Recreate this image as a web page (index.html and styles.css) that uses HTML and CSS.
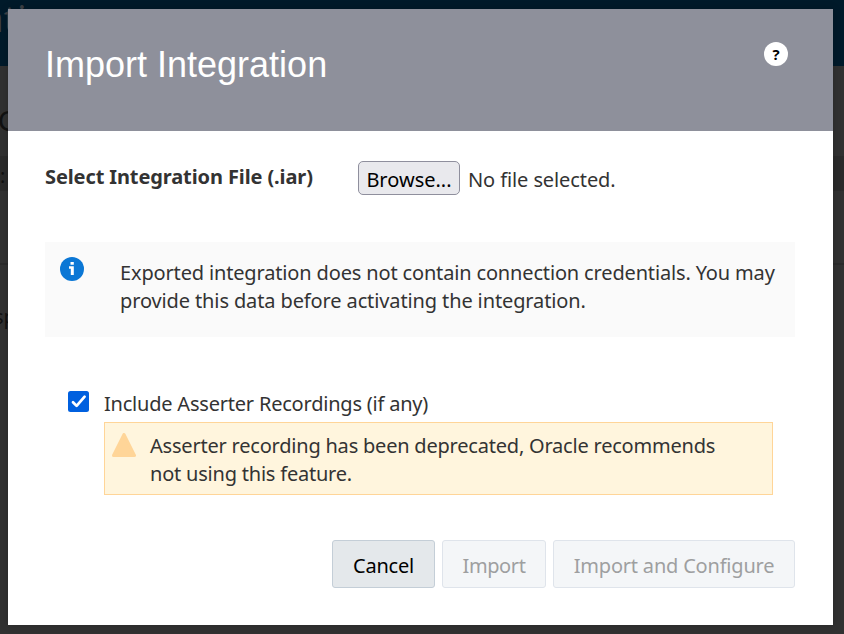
FILE: index.html
```
<!DOCTYPE html>
<html lang="en">
<head>
<meta charset="utf-8">
<title>Import Integration</title>
<link rel="stylesheet" href="styles.css">
</head>
<body>
<div class="page">
  <div class="page-top"><span class="page-brand">ati</span></div>
  <div class="page-heading">C</div>
  <div class="page-filter">:</div>
  <div class="page-list"><span>sp</span></div>
</div>
<section class="dialog" role="dialog" aria-labelledby="title">
  <header class="dialog-header">
    <h1 id="title">Import Integration</h1>
    <button class="help" type="button">?</button>
  </header>
  <div class="file-row">
    <span class="file-label">Select Integration File (.iar)</span>
    <button class="browse" type="button">Browse...</button>
    <span class="file-name">No file selected.</span>
  </div>
  <div class="info">
    <svg class="info-icon" viewBox="0 0 24 24"><circle cx="12" cy="12" r="12" fill="#0b77d5"/><path d="M10.5 5h3.3v2.7h-3.3zM9 9.2h4.8V18h-3v-6.3H9z" fill="#fff"/></svg>
    <p><span class="info-first">Exported integration does not contain connection credentials. You may</span><br>provide this data before activating the integration.</p>
  </div>
  <div class="option">
    <svg class="check" viewBox="0 0 21 21"><rect width="21" height="21" rx="2.5" fill="#0060df"/><path d="M5 11.2l3.6 3.7 8-9.2" fill="none" stroke="#fff" stroke-width="2.7" stroke-linecap="round" stroke-linejoin="round"/></svg>
    <span class="option-label">Include Asserter Recordings (if any)</span>
  </div>
  <div class="warning">
    <svg class="warning-icon" viewBox="0 0 24 24"><path d="M12 1.5L22.5 22.5h-21z" fill="#ffd598" stroke="#ffd598" stroke-width="3" stroke-linejoin="round"/></svg>
    <p>Asserter recording has been deprecated, Oracle recommends<br>not using this feature.</p>
  </div>
  <footer class="actions">
    <button class="btn cancel" type="button">Cancel</button>
    <button class="btn import" type="button" disabled>Import</button>
    <button class="btn configure" type="button" disabled>Import and Configure</button>
  </footer>
</section>
</body>
</html>
```
FILE: styles.css
```
* { box-sizing: border-box; }
body {
  margin: 0;
  height: 634px;
  overflow: hidden;
  background: #313131;
  color: #333;
  font: 20px/28px "Noto Sans", "Open Sans", sans-serif;
}
h1, p { margin: 0; }
button { margin: 0; padding: 0; font: inherit; letter-spacing: inherit; white-space: nowrap; }
svg { display: block; flex: none; }
.page { color: #111; overflow: hidden; height: 634px; }
.page-top { height: 66px; background: #001a2a; color: #3d4146; font-size: 37px; line-height: 36px; }
.page-brand { display: block; margin-left: -17px; }
.page-heading { height: 90px; margin-left: -2px; padding-top: 37px; font: 29px/36px "Liberation Sans", sans-serif; }
.page-filter { height: 35px; padding-top: 6px; background: #2b2b2b; }
.page-list { margin-top: 72px; border-top: 2px solid #2a2a2a; padding-top: 38px; }
.page-list span { display: block; margin-left: -6px; }
.dialog {
  position: absolute;
  left: 8px;
  top: 9px;
  width: 825px;
  height: 616px;
  background: #fff;
  box-shadow: 0 0 8px rgba(0, 0, 0, .2);
}
.dialog-header {
  display: flex;
  justify-content: space-between;
  height: 122px;
  padding: 33px 45px 0 37px;
  background: #8e909b;
}
h1 { padding-top: 1px; color: #fff; font: 36px/44px "Liberation Sans", Arial, sans-serif; }
.help {
  width: 24px;
  height: 24px;
  border: 0;
  border-radius: 50%;
  background: #fff;
  color: #000;
  font: bold 15px/22px "Open Sans", sans-serif;
}
.file-row { display: flex; height: 64px; padding: 30px 0 0 37px; white-space: nowrap; }
.file-label { width: 313px; margin-top: 2px; font-weight: 700; letter-spacing: -.11px; }
.browse {
  width: 102px;
  height: 34px;
  padding-top: 3px;
  border: 1px solid #8f8f9d;
  border-radius: 5px;
  background: #e9e9ed;
  color: #000;
}
.file-name { margin: 5px 0 0 8px; letter-spacing: -.1px; }
.info { display: flex; width: 750px; height: 95px; margin: 47px 0 0 37px; padding: 15px; background: #fafafa; letter-spacing: -.12px; white-space: nowrap; }
.info-icon { width: 24px; height: 24px; }
.info p { margin: 2px 0 0 36px; }
.info-first { letter-spacing: -.155px; }
.option { display: flex; gap: 15px; height: 31px; margin: 54px 0 0 60px; letter-spacing: -.21px; white-space: nowrap; }
.option-label { margin-top: -1px; }
.check { width: 21px; height: 21px; }
.warning { display: flex; gap: 14px; width: 669px; height: 73px; margin: 0 0 0 96px; padding: 9px 7px; border: 1px solid #ffd598; background: #fff5dd; letter-spacing: -.21px; white-space: nowrap; }
.warning-icon { width: 24px; height: 24px; margin-top: 1px; }
.actions { display: flex; justify-content: flex-end; gap: 7px; margin: 45px 38px 0 0; letter-spacing: -.2px; }
.btn { height: 48px; padding-top: 3px; border: 1px solid #dfe4eb; border-radius: 3px; background: #f4f6f8; color: #9e9fa0; }
.cancel { width: 103px; border-color: #c4ced7; background: #e4e8eb; color: #000; }
.import { width: 104px; letter-spacing: -.4px; }
.configure { width: 242px; }
```
